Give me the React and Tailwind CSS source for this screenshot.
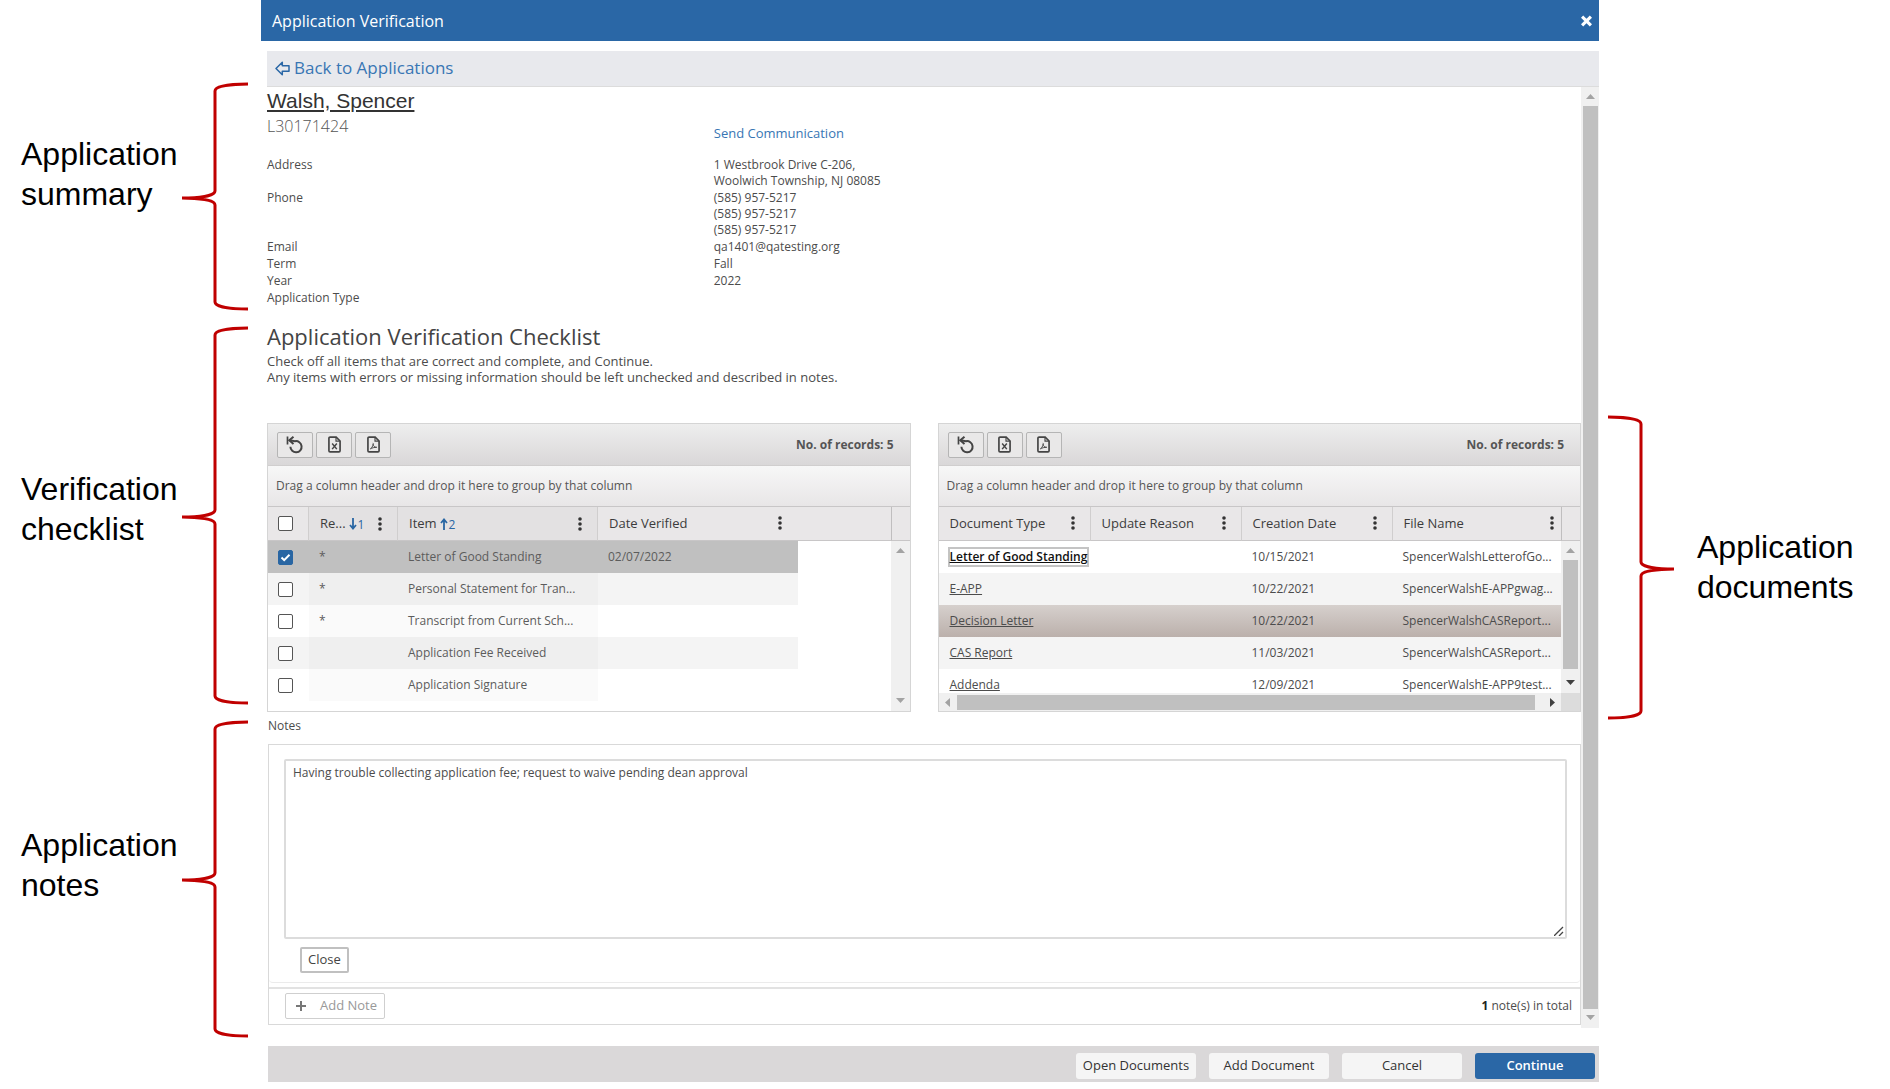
import React, { useState } from 'react';

const checklist = [
  { id: 1, required: true, item: 'Letter of Good Standing', date: '02/07/2022', verified: true },
  { id: 2, required: true, item: 'Personal Statement for Tran...', date: '' },
  { id: 3, required: true, item: 'Transcript from Current Sch...', date: '' },
  { id: 4, required: false, item: 'Application Fee Received', date: '' },
  { id: 5, required: false, item: 'Application Signature', date: '' },
];

const documents = [
  { type: 'Letter of Good Standing', created: '10/15/2021', file: 'SpencerWalshLetterofGo...' },
  { type: 'E-APP', created: '10/22/2021', file: 'SpencerWalshE-APPgwag...' },
  { type: 'Decision Letter', created: '10/22/2021', file: 'SpencerWalshCASReport...' },
  { type: 'CAS Report', created: '11/03/2021', file: 'SpencerWalshCASReport...' },
  { type: 'Addenda', created: '12/09/2021', file: 'SpencerWalshE-APP9test...' },
];

const summary = [
  { label: 'Address', lines: ['1 Westbrook Drive C-206,', 'Woolwich Township, NJ 08085'] },
  { label: 'Phone', lines: ['(585) 957-5217', '(585) 957-5217', '(585) 957-5217'] },
  { label: 'Email', lines: ['qa1401@qatesting.org'] },
  { label: 'Term', lines: ['Fall'] },
  { label: 'Year', lines: ['2022'] },
  { label: 'Application Type', lines: [] },
];

// Curly brace that opens to the right; flip it for the right hand side
const Brace = ({ height, flip }) => {
  const mid = Math.round(height / 2) + 1;
  const d = `M66 2 C50 2 33 4 33 9 V${mid - 7} C33 ${mid - 2} 16 ${mid} 0 ${mid} C16 ${mid} 33 ${mid + 2} 33 ${mid + 7} V${height - 9} C33 ${height - 4} 50 ${height - 2} 66 ${height - 2}`;
  return (
    <svg width="66" height={height} viewBox={`0 0 66 ${height}`} fill="none" className="shrink-0">
      <path d={d} stroke="#c00000" strokeWidth="3" transform={flip ? 'translate(66 0) scale(-1 1)' : undefined} />
    </svg>
  );
};

const Triangle = ({ dir, className }) => {
  const points = {
    up: '0,6 9,6 4.5,1',
    down: '0,2 9,2 4.5,7',
    left: '6,0 6,9 1,4.5',
    right: '2,0 2,9 7,4.5',
  };
  return (
    <svg width="9" height="9" viewBox="0 0 9 9" className={className}>
      <polygon points={points[dir]} fill="currentColor" />
    </svg>
  );
};

const Dots = () => (
  <svg width="4" height="14" viewBox="0 0 4 14" fill="#333" className="shrink-0">
    <circle cx="2" cy="2" r="1.8" />
    <circle cx="2" cy="7" r="1.8" />
    <circle cx="2" cy="12" r="1.8" />
  </svg>
);

const ResetIcon = () => (
  <svg width="18" height="18" viewBox="0 0 18 18" fill="none" stroke="#444" strokeWidth="2">
    <path d="M1.500 0.500v8" strokeWidth="1.700" />
    <path d="M7.500 0.800 3.300 4.200l4.200 3.800" />
    <path d="M3.500 4.200 9 5.200a5.600 5.600 0 1 1-4.600 5.600" />
  </svg>
);

const FileIcon = ({ children }) => (
  <svg width="13" height="17" viewBox="0 0 14 18" fill="none" stroke="#444" strokeWidth="1.800">
    <path d="M2.2 1h6.600L13 5.200v10.600a1.200 1.200 0 0 1-1.200 1.200H2.200A1.200 1.200 0 0 1 1 15.800V2.200A1.200 1.200 0 0 1 2.200 1z" />
    <path d="M8.600 1.200v4.200h4.200" strokeWidth="1.200" />
    {children}
  </svg>
);

const ToolButton = ({ label, children }) => (
  <button
    aria-label={label}
    className="flex h-[26px] w-9 items-center justify-center rounded-[2px] border border-[#b5b5b5] bg-[#e9e8e8]"
  >
    {children}
  </button>
);

const GridToolbar = () => (
  <>
    <div className="flex h-[42px] items-center gap-[3px] border-b border-[#d0cece] bg-linear-to-b from-[#eeeeee] to-[#d9d7d8] pr-4 pl-[9px]">
      <ToolButton label="Reset">
        <ResetIcon />
      </ToolButton>
      <ToolButton label="Export to Excel">
        <FileIcon>
          <path d="M4.500 8l5 6M9.500 8l-5 6" strokeWidth="1.600" />
        </FileIcon>
      </ToolButton>
      <ToolButton label="Export to PDF">
        <FileIcon>
          <path d="M6.300 7.500c1.500 0-.5 5-3 6.500M6.300 8.500c.8 2.500 2 3.500 4.200 3.500-2 0-4.500.4-6.200 1.200" strokeWidth="1" />
        </FileIcon>
      </ToolButton>
      <span className="ml-auto font-bold text-[#555]">No. of records: 5</span>
    </div>
    <div className="flex h-[41px] items-center border-b border-[#c8c6c7] bg-linear-to-b from-[#f7f7f7] to-[#e8e6e7] pl-2 text-[#555]">
      Drag a column header and drop it here to group by that column
    </div>
  </>
);

const HeaderCell = ({ title, sort, order, last, className = 'pr-[15px]' }) => (
  <th
    className={`border-b border-b-[#c8c6c7] pl-[11px] text-left text-[13px] font-medium text-[#3c3c3c] ${className} ${
      last ? '' : 'border-r border-r-[#d0cece]'
    } ${sort ? 'bg-[#e3e1e2]' : 'bg-[#e9e7e8]'}`}
  >
    <div className="flex items-center">
      <span className="whitespace-nowrap">{title}</span>
      {sort && (
        <span className="ml-[3px] flex items-center font-normal text-[#2966a3]">
          <svg width="8" height="12" viewBox="0 0 8 12" fill="none" stroke="currentColor" strokeWidth="1.8">
            <path d={sort === 'up' ? 'M4 12V2M1 5l3-3.500L7 5' : 'M4 0v10M1 7l3 3.500L7 7'} />
          </svg>
          <span className="ml-px pt-0.5 text-xs">{order}</span>
        </span>
      )}
      <span className="ml-auto">
        <Dots />
      </span>
    </div>
  </th>
);

const Check = ({ label, checked, onChange }) => (
  <span className="relative ml-[10px] flex size-[15px]">
    <input
      type="checkbox"
      aria-label={label}
      checked={checked}
      onChange={onChange}
      className="size-[15px] appearance-none rounded-[2px] border border-[#555] bg-white checked:border-[#2966a3] checked:bg-[#2966a3]"
    />
    {checked && (
      <svg viewBox="0 0 15 15" fill="none" stroke="#fff" strokeWidth="2" className="pointer-events-none absolute inset-0">
        <path d="M3.500 7.500l2.700 2.700 5.300-5.400" />
      </svg>
    )}
  </span>
);

const ChecklistGrid = () => {
  const [checked, setChecked] = useState(checklist.filter((r) => r.verified).map((r) => r.id));

  const toggle = (id) =>
    setChecked(checked.includes(id) ? checked.filter((c) => c !== id) : [...checked, id]);

  const toggleAll = () =>
    setChecked(checked.length === checklist.length ? [] : checklist.map((r) => r.id));

  return (
    <div className="flex min-w-0 flex-1 flex-col border border-[#d5d5d5]">
      <GridToolbar />
      <div className="flex min-h-0 flex-1">
        <div className="min-w-0 flex-1 overflow-hidden">
          <table className="w-full table-fixed border-separate border-spacing-0">
            <colgroup>
              <col className="w-[41px]" />
              <col className="w-[89px]" />
              <col className="w-[200px]" />
              <col className="w-[200px]" />
              <col />
            </colgroup>
            <thead>
              <tr className="h-[34px]">
                <th className="border-r border-b border-r-[#d0cece] border-b-[#c8c6c7] bg-[#e9e7e8]">
                  <Check label="Select all" checked={checked.length === checklist.length} onChange={toggleAll} />
                </th>
                <HeaderCell title="Re..." sort="down" order="1" />
                <HeaderCell title="Item" sort="up" order="2" />
                <HeaderCell title="Date Verified" last className="pr-4" />
                <td className="border-b border-b-[#c8c6c7] bg-[#e9e7e8]" />
              </tr>
            </thead>
            <tbody className="text-[#5c5c5c]">
              {checklist.map((row, i) => {
                const on = checked.includes(row.id);
                const plain = on ? 'bg-[#c0c0c0]' : i % 2 ? 'bg-[#f4f4f4]' : 'bg-white';
                const sorted = on ? 'bg-[#c0c0c0]' : i % 2 ? 'bg-[#efefef]' : 'bg-[#fafafa]';
                return (
                  <tr key={row.id} className="h-8">
                    <td className={plain}>
                      <Check label={row.item} checked={on} onChange={() => toggle(row.id)} />
                    </td>
                    <td className={`pl-[10px] ${sorted}`}>{row.required ? '*' : ''}</td>
                    <td className={`pl-[10px] whitespace-nowrap ${sorted}`}>{row.item}</td>
                    <td className={`pl-[10px] ${plain}`}>{row.date}</td>
                    <td />
                  </tr>
                );
              })}
            </tbody>
          </table>
        </div>
        <div className="flex w-[19px] flex-col">
          <div className="h-[34px] border-b border-l border-b-[#c8c6c7] border-l-[#c0bebf] bg-[#e9e7e8]" />
          <div className="flex flex-1 flex-col items-center justify-between bg-[#f0f0f0] py-[6px] text-[#a3a3a3]">
            <Triangle dir="up" />
            <Triangle dir="down" />
          </div>
        </div>
      </div>
    </div>
  );
};

const DocumentsGrid = () => (
  <div className="flex min-w-0 flex-1 flex-col border border-[#d5d5d5]">
    <GridToolbar />
    <div className="flex h-[186px]">
      <div className="min-w-0 flex-1 overflow-hidden">
        <table className="w-full table-fixed border-separate border-spacing-0">
          <colgroup>
            <col className="w-[152px]" />
            <col className="w-[151px]" />
            <col className="w-[151px]" />
            <col />
          </colgroup>
          <thead>
            <tr className="h-[34px]">
              <HeaderCell title="Document Type" />
              <HeaderCell title="Update Reason" />
              <HeaderCell title="Creation Date" />
              <HeaderCell title="File Name" last className="pr-[7px]" />
            </tr>
          </thead>
          <tbody className="text-[#4c4c4c]">
            {documents.map((doc, i) => (
              <tr
                key={doc.type}
                className={`h-8 ${
                  i === 2 ? 'bg-linear-to-b from-[#d6d0cd] to-[#bbb0ab]' : i % 2 ? 'bg-[#f4f4f4]' : 'bg-white'
                }`}
              >
                <td className="overflow-hidden pl-[9px] whitespace-nowrap">
                  <a
                    href="#document"
                    className={`inline-block border-2 underline ${
                      i === 0 ? 'border-[#c4c4c4] font-semibold text-[#111]' : 'border-transparent'
                    }`}
                  >
                    {doc.type}
                  </a>
                </td>
                <td />
                <td className="pl-[10px]">{doc.created}</td>
                <td className="overflow-hidden pl-[10px] whitespace-nowrap">{doc.file}</td>
              </tr>
            ))}
          </tbody>
        </table>
      </div>
      <div className="flex w-[19px] flex-col">
        <div className="h-[34px] border-b border-l border-b-[#c8c6c7] border-l-[#c0bebf] bg-[#e9e7e8]" />
        <div className="flex flex-1 flex-col items-center bg-[#f0f0f0] pt-[6px] pb-[6px]">
          <Triangle dir="up" className="text-[#a3a3a3]" />
          <div className="mt-1 h-[109px] w-[15px] bg-[#c0c0c0]" />
          <Triangle dir="down" className="mt-auto text-[#404040]" />
        </div>
      </div>
    </div>
    <div className="flex h-[18px] bg-[#f0f0f0]">
      <div className="flex flex-1 items-center pl-[5px]">
        <Triangle dir="left" className="text-[#a3a3a3]" />
        <div className="ml-1 h-[15px] flex-1 bg-[#c0c0c0]" />
        <Triangle dir="right" className="mr-1 ml-[13px] text-[#404040]" />
      </div>
      <div className="w-[19px] bg-[#dcdcdc]" />
    </div>
  </div>
);

const Notes = () => {
  const [note, setNote] = useState(
    'Having trouble collecting application fee; request to waive pending dean approval'
  );

  return (
    <>
      <label htmlFor="note" className="mt-[6px] ml-px block leading-4">
        Notes
      </label>
      <div className="mt-[10px] ml-px border border-[#d9d9d9]">
        <div className="rounded-b-[4px] border-b border-[#ebebeb] pt-[14px] pr-[13px] pb-[9px] pl-[15px]">
          <div className="relative">
            <textarea
              id="note"
              value={note}
              onChange={(e) => setNote(e.target.value)}
              className="block h-[180px] w-full resize-none rounded-[2px] border-2 border-[#dcdcdc] px-[7px] py-1 leading-4 text-[#4c4c4c] outline-none"
            />
            <svg width="10" height="10" viewBox="0 0 10 10" stroke="#444" strokeWidth="1.3" className="pointer-events-none absolute right-[3px] bottom-[3px]">
              <path d="M0 10 9 1M5 10l4-4" />
            </svg>
          </div>
          <button className="mt-2 ml-4 h-[26px] rounded-[2px] border-2 border-[#c0c0c0] bg-white px-[6px] text-[13px] text-[#444]">
            Close
          </button>
        </div>
        <div className="mt-[4px] flex items-center justify-between border-t-2 border-[#e2e2e2] pt-1 pr-2 pb-[5px] pl-4">
          <button className="flex h-[26px] items-center rounded-[2px] border border-[#cfcfcf] bg-white pr-[7px] pl-[10px] text-[13px] text-[#999]">
            <svg width="10" height="10" viewBox="0 0 10 10" stroke="#777" strokeWidth="2" className="mr-[14px]">
              <path d="M5 0v10M0 5h10" />
            </svg>
            Add Note
          </button>
          <span className="text-[#4c4c4c]">
            <b className="text-[#222]">1</b> note(s) in total
          </span>
        </div>
      </div>
    </>
  );
};

const Annotation = ({ first, second, height, labelClass }) => (
  <div className="flex justify-between">
    <div className={labelClass}>
      {first}
      <br />
      {second}
    </div>
    <Brace height={height} />
  </div>
);

const App = () => (
  <div className="flex min-h-screen bg-white font-['Open_Sans','Noto_Sans',sans-serif] text-xs text-[#4c4c4c]">
    {/* Left annotations */}
    <aside className="flex w-[261px] shrink-0 flex-col gap-[15px] pt-[82px] pr-[13px] pl-[21px] font-['Liberation_Sans',Arial,sans-serif] text-[32px] leading-10 text-black">
      <Annotation first="Application" second="summary" height={229} labelClass="pt-[52px]" />
      <Annotation first="Verification" second="checklist" height={379} labelClass="pt-[143px]" />
      <Annotation first="Application" second="notes" height={318} labelClass="pt-[105px]" />
    </aside>

    {/* Dialog */}
    <main className="min-w-0 flex-1">
      <header className="flex h-[41px] items-center justify-between bg-[#2a67a6] pr-[7px] pl-[11px] text-base text-white">
        <h1>Application Verification</h1>
        <button aria-label="Close dialog">
          <svg width="11" height="12" viewBox="0 0 12 12" stroke="#fff" strokeWidth="3.400">
            <path d="M1.200 1.200l9.600 9.600M10.800 1.200l-9.600 9.600" />
          </svg>
        </button>
      </header>

      <div className="mt-[10px] ml-[6px] flex h-[36px] items-center border-b border-[#dcdcdc] bg-[#e8e9ed] pl-2">
        <a href="#applications" className="flex items-center gap-1 text-[17px] text-[#3876b4]">
          <svg width="15" height="15" viewBox="0 0 15 15" fill="none" stroke="#2a67a6" strokeWidth="1.5" strokeLinejoin="round">
            <path d="M1 7.500 7.300 1.200v3.500H14v5.600H7.300v3.500z" />
          </svg>
          Back to Applications
        </a>
      </div>

      <div className="ml-[6px] flex">
        <div className="min-w-0 flex-1 pb-[3px]">
          <section>
            <div className="grid grid-cols-[34%_1fr]">
              <div>
                <a
                  href="#applicant"
                  className="block font-['Liberation_Sans',Arial,sans-serif] text-[21px] leading-7 text-[#333] underline decoration-2 underline-offset-2"
                >
                  Walsh, Spencer
                </a>
                <div className="text-base leading-[22px] font-light text-[#555]">L30171424</div>
              </div>
              <a href="#communication" className="pt-9 text-[13px] leading-5 text-[#3876b4]">
                Send Communication
              </a>
            </div>
            <dl className="mt-[14px] grid grid-cols-[34%_1fr] gap-y-px leading-4">
              {summary.map((row) => (
                <React.Fragment key={row.label}>
                  <dt>{row.label}</dt>
                  <dd>
                    {row.lines.map((line, i) => (
                      <div key={i}>{line}</div>
                    ))}
                  </dd>
                </React.Fragment>
              ))}
            </dl>
          </section>

          <section className="mt-4">
            <h2 className="text-[22px] leading-7 text-[#444]">Application Verification Checklist</h2>
            <p className="mt-[3px] text-[13px] leading-4">
              Check off all items that are correct and complete, and Continue.
              <br />
              Any items with errors or missing information should be left unchecked and described in notes.
            </p>
            <div className="mt-[38px] flex min-h-[289px] gap-[27px]">
              <ChecklistGrid />
              <DocumentsGrid />
            </div>
          </section>

          <Notes />
        </div>

        {/* Dialog scrollbar */}
        <div className="flex w-[18px] flex-col items-center bg-[#f0f0f0] py-[6px] text-[#a3a3a3]">
          <Triangle dir="up" />
          <div className="my-1 w-[15px] flex-1 bg-[#c0c0c0]" />
          <Triangle dir="down" />
        </div>
      </div>

      <footer className="mt-[18px] ml-[7px] flex h-[36px] items-end justify-end gap-[13px] bg-[#dad8d9] pr-1 pb-[3px] text-[13px] font-medium text-[#333]">
        <button className="h-[26px] w-[120px] rounded-[3px] bg-[#f5f5f5]">Open Documents</button>
        <button className="h-[26px] w-[120px] rounded-[3px] bg-[#f5f5f5]">Add Document</button>
        <button className="h-[26px] w-[120px] rounded-[3px] bg-[#f5f5f5]">Cancel</button>
        <button className="h-[26px] w-[120px] rounded-[3px] bg-[#2a67a6] font-semibold text-white">Continue</button>
      </footer>
    </main>

    {/* Right annotation */}
    <aside className="flex w-[291px] shrink-0 items-start pt-[415px] pl-[9px] font-['Liberation_Sans',Arial,sans-serif] text-[32px] leading-10 text-black">
      <Brace height={305} flip />
      <div className="pt-[112px] pl-[23px]">
        Application
        <br />
        documents
      </div>
    </aside>
  </div>
);

export default App;
